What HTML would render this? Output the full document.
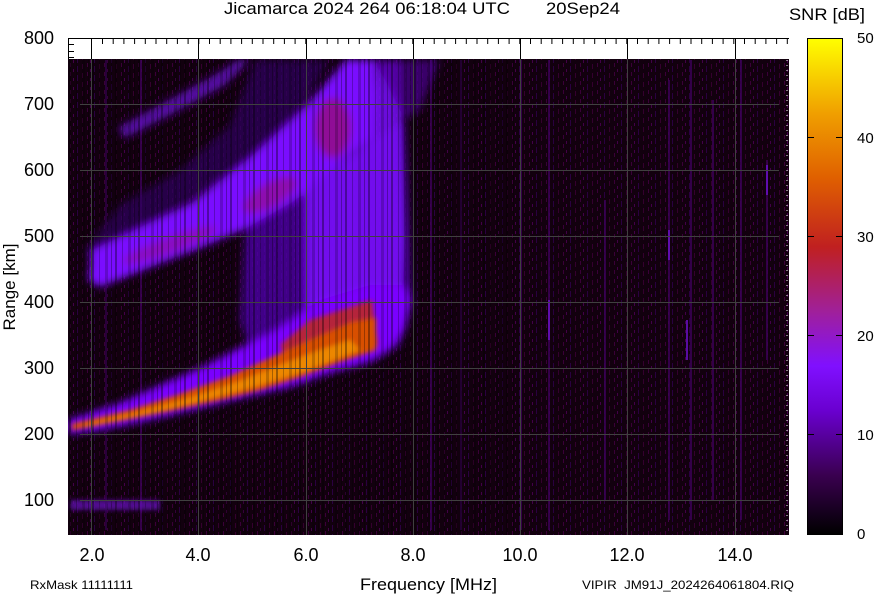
<!DOCTYPE html>
<html><head><meta charset="utf-8"><style>
html,body{margin:0;padding:0;background:#fff;width:874px;height:595px;overflow:hidden}
svg{display:block}
text{font-family:"Liberation Sans",sans-serif;fill:#000}
</style></head><body>
<svg width="874" height="595" viewBox="0 0 874 595" xmlns="http://www.w3.org/2000/svg">
<defs>
<linearGradient id="cb" x1="0" y1="1" x2="0" y2="0">
<stop offset="0" stop-color="#000000"/>
<stop offset="0.12" stop-color="#3a0050"/>
<stop offset="0.25" stop-color="#6a00d0"/>
<stop offset="0.34" stop-color="#8010ff"/>
<stop offset="0.45" stop-color="#a0209a"/>
<stop offset="0.58" stop-color="#c02020"/>
<stop offset="0.72" stop-color="#e06000"/>
<stop offset="0.85" stop-color="#f0a000"/>
<stop offset="1" stop-color="#ffff00"/>
</linearGradient>
<filter id="b3" x="-10%" y="-10%" width="120%" height="120%"><feGaussianBlur stdDeviation="4"/></filter>
<filter id="b2"><feGaussianBlur stdDeviation="2.5"/></filter>
<pattern id="streak" width="23" height="10" patternUnits="userSpaceOnUse">
<rect x="0" y="0" width="2" height="10" fill="#000" opacity="0.35"/>
<rect x="7" y="0" width="1" height="10" fill="#000" opacity="0.25"/>
<rect x="13" y="0" width="3" height="10" fill="#000" opacity="0.2"/>
<rect x="19" y="0" width="1" height="10" fill="#000" opacity="0.3"/>
</pattern>
<pattern id="noise" width="17" height="9" patternUnits="userSpaceOnUse">
<rect x="2" y="0" width="1" height="4" fill="#3a0038"/>
<rect x="9" y="3" width="1" height="6" fill="#2a0040"/>
<rect x="14" y="1" width="1" height="5" fill="#34002e"/>
<rect x="5" y="6" width="1" height="3" fill="#420048"/>
</pattern>
<clipPath id="pc"><rect x="68" y="59" width="721" height="476"/></clipPath>
</defs>

<rect x="68" y="38" width="721" height="497" fill="#fff"/>
<rect x="68" y="59" width="721" height="476" fill="#12000e"/>
<rect x="68" y="59" width="721" height="476" fill="url(#noise)"/>
<g clip-path="url(#pc)">
<g fill="#3c0058" opacity="0.8">
<rect x="520" y="60" width="2" height="470"/><rect x="548" y="60" width="2" height="470"/>
<rect x="604" y="200" width="2" height="300"/><rect x="668" y="80" width="2" height="440"/>
<rect x="690" y="60" width="2" height="460"/><rect x="712" y="100" width="2" height="400"/>
<rect x="740" y="60" width="2" height="460"/><rect x="766" y="160" width="2" height="200"/>
<rect x="460" y="60" width="2" height="470"/><rect x="430" y="60" width="2" height="470"/>
<rect x="105" y="60" width="2" height="470"/><rect x="140" y="60" width="2" height="470"/>
</g>
<g fill="#6a10c8" opacity="0.8">
<rect x="686" y="320" width="2" height="40"/><rect x="668" y="230" width="2" height="30"/>
<rect x="766" y="165" width="2" height="30"/><rect x="548" y="300" width="2" height="40"/>
</g>
<g filter="url(#b3)">
<polygon points="118,128 160,105 215,75 238,60 250,60 225,85 170,115 125,138" fill="#6010c0" opacity="0.85"/>
<polygon points="85,250 120,205 180,170 230,125 255,60 330,60 300,110 250,160 190,200 120,240 95,275" fill="#300060" opacity="0.7"/>
<polygon points="240,320 245,230 300,195 360,150 405,120 412,300 400,345 375,360 300,375 260,385" fill="#5000b0" opacity="0.75"/>
<polygon points="305,370 305,190 370,140 378,60 400,60 405,240 400,330 380,352" fill="#7a10ff" opacity="0.85"/>
<polygon points="375,60 440,60 420,110 405,120" fill="#4a0090" opacity="0.7"/>
<polygon points="92,250 130,232 193,202 253,155 307,105 333,75 345,60 376,60 373,138 353,152 293,202 247,228 200,248 100,287 88,280" fill="#7a08ff"/>
<ellipse cx="333" cy="128" rx="18" ry="30" fill="#a01840" opacity="0.55"/>
<ellipse cx="270" cy="195" rx="30" ry="12" fill="#a01860" opacity="0.5" transform="rotate(-30 270 195)"/>
<ellipse cx="170" cy="245" rx="50" ry="8" fill="#a01860" opacity="0.4" transform="rotate(-20 170 245)"/>
<polygon points="68,420 120,403 160,385 200,368 235,350 275,330 320,300 370,285 405,285 412,300 405,330 390,350 370,362 330,373 290,387 250,396 200,408 150,420 100,430 68,434" fill="#7a00ff"/>
</g>
<g filter="url(#b2)">
<polygon points="280,345 310,320 372,300 378,345 340,360 290,372" fill="#c02818" opacity="0.85"/>
<polygon points="72,424 130,410 180,394 230,376 270,358 310,340 352,322 376,318 376,350 340,362 300,377 260,390 220,400 170,411 120,421 72,430" fill="#d85000"/>
<polygon points="85,425 140,412 190,398 240,381 280,365 320,350 350,340 360,350 300,373 250,388 200,401 150,413 100,423 85,427" fill="#f09000" opacity="0.85"/>
<rect x="70" y="500" width="90" height="10" fill="#6010b0" opacity="0.8"/>
</g>
<rect x="68" y="59" width="450" height="476" fill="url(#streak)"/>
</g>

<g stroke="#404040" stroke-width="1">
<line x1="91.5" y1="38" x2="91.5" y2="535"/><line x1="198.5" y1="38" x2="198.5" y2="535"/>
<line x1="306.5" y1="38" x2="306.5" y2="535"/><line x1="413.5" y1="38" x2="413.5" y2="535"/>
<line x1="520.5" y1="38" x2="520.5" y2="535"/><line x1="627.5" y1="38" x2="627.5" y2="535"/>
<line x1="735.5" y1="38" x2="735.5" y2="535"/>
<line x1="80" y1="104.5" x2="779" y2="104.5"/><line x1="80" y1="170.5" x2="779" y2="170.5"/>
<line x1="80" y1="236.5" x2="779" y2="236.5"/><line x1="80" y1="302.5" x2="779" y2="302.5"/>
<line x1="80" y1="368.5" x2="779" y2="368.5"/><line x1="80" y1="434.5" x2="779" y2="434.5"/>
<line x1="80" y1="500.5" x2="779" y2="500.5"/>
</g>
<g stroke="#000" stroke-width="1">
<line x1="68" y1="38.5" x2="789" y2="38.5"/>
<line x1="68.5" y1="38" x2="68.5" y2="59"/>
<line x1="68" y1="44.5" x2="74" y2="44.5"/><line x1="68" y1="51.5" x2="74" y2="51.5"/><line x1="68" y1="57.5" x2="74" y2="57.5"/>
<line x1="91.5" y1="38" x2="91.5" y2="59"/><line x1="198.5" y1="38" x2="198.5" y2="59"/><line x1="306.5" y1="38" x2="306.5" y2="59"/>
<line x1="413.5" y1="38" x2="413.5" y2="59"/><line x1="520.5" y1="38" x2="520.5" y2="59"/><line x1="627.5" y1="38" x2="627.5" y2="59"/><line x1="735.5" y1="38" x2="735.5" y2="59"/>
</g>
<g stroke="#000" stroke-dasharray="1,9.7">
<line x1="102" y1="41" x2="789" y2="41" stroke-width="6"/>
</g>
<g stroke="#fff" stroke-width="1" stroke-dasharray="1,4">
<line x1="787" y1="60" x2="787" y2="535"/>
</g>

<rect x="807.5" y="38.5" width="35" height="496" fill="url(#cb)" stroke="#000"/>
<g stroke="#000"><line x1="808" y1="137.5" x2="814" y2="137.5"/><line x1="836" y1="137.5" x2="842" y2="137.5"/>
<line x1="808" y1="236.5" x2="814" y2="236.5"/><line x1="836" y1="236.5" x2="842" y2="236.5"/>
<line x1="808" y1="335.5" x2="814" y2="335.5"/><line x1="836" y1="335.5" x2="842" y2="335.5"/>
<line x1="808" y1="434.5" x2="814" y2="434.5"/><line x1="836" y1="434.5" x2="842" y2="434.5"/></g>
<g font-size="15">
<text x="857" y="43">50</text><text x="857" y="143">40</text><text x="857" y="242">30</text>
<text x="857" y="341">20</text><text x="857" y="440">10</text><text x="857" y="539">0</text>
</g>
<text x="789" y="20" font-size="17" textLength="76" lengthAdjust="spacingAndGlyphs">SNR [dB]</text>

<text x="224" y="14" font-size="17" textLength="286" lengthAdjust="spacingAndGlyphs">Jicamarca 2024 264 06:18:04 UTC</text>
<text x="546" y="14" font-size="17" textLength="74" lengthAdjust="spacingAndGlyphs">20Sep24</text>

<g font-size="18" text-anchor="end">
<text x="54" y="44">800</text><text x="54" y="110">700</text><text x="54" y="176">600</text>
<text x="54" y="242">500</text><text x="54" y="308">400</text><text x="54" y="374">300</text>
<text x="54" y="440">200</text><text x="54" y="506">100</text>
</g>
<text transform="translate(15,287) rotate(-90)" font-size="17" text-anchor="middle">Range [km]</text>

<g font-size="18" text-anchor="middle">
<text x="92" y="561">2.0</text><text x="198" y="561">4.0</text><text x="306" y="561">6.0</text>
<text x="413" y="561">8.0</text><text x="520" y="561">10.0</text><text x="627" y="561">12.0</text>
<text x="735" y="561">14.0</text>
</g>
<text x="360" y="590" font-size="17" textLength="137" lengthAdjust="spacingAndGlyphs">Frequency [MHz]</text>
<text x="30" y="589" font-size="12" textLength="103" lengthAdjust="spacingAndGlyphs">RxMask 11111111</text>
<text x="582" y="589" font-size="12" xml:space="preserve" textLength="212" lengthAdjust="spacingAndGlyphs">VIPIR  JM91J_2024264061804.RIQ</text>
</svg>
</body></html>
